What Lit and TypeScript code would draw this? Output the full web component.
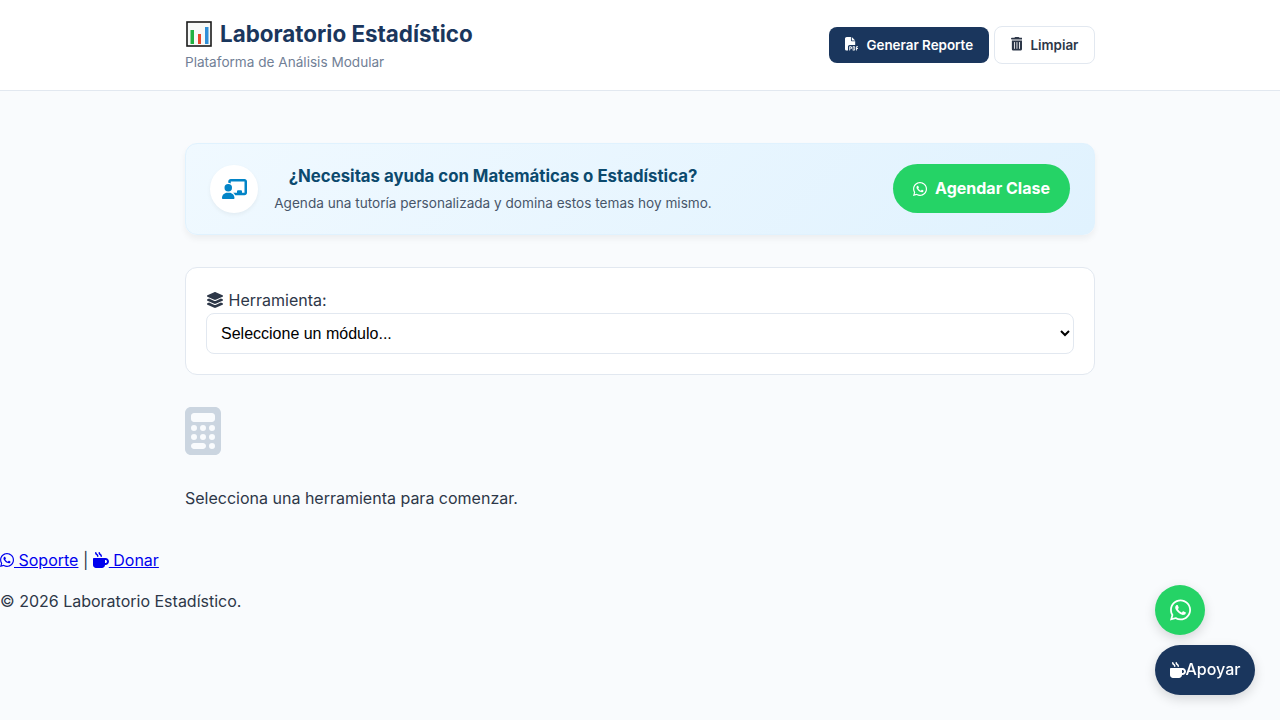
import { LitElement, html, css, svg } from "lit";
import { customElement } from "lit/decorators.js";

const WA = "M380.9 97.1C339 55.1 283.2 32 223.9 32c-122.4 0-222 99.6-222 222 0 39.1 10.2 77.3 29.6 111L0 480l117.7-30.9c32.4 17.7 68.9 27 106.1 27h.1c122.3 0 224.1-99.6 224.1-222 0-59.3-25.2-115-67.1-157zm-157 341.6c-33.2 0-65.7-8.9-94-25.7l-6.7-4-69.8 18.3L72 359.2l-4.4-7c-18.5-29.4-28.2-63.3-28.2-98.2 0-101.7 82.8-184.5 184.6-184.5 49.3 0 95.6 19.2 130.4 54.1 34.8 34.9 56.2 81.2 56.1 130.5 0 101.8-84.9 184.6-186.6 184.6zm101.2-138.2c-5.5-2.8-32.8-16.2-37.9-18-5.1-1.9-8.8-2.8-12.5 2.8-3.7 5.6-14.3 18-17.6 21.8-3.2 3.7-6.5 4.2-12 1.4-32.6-16.3-54-29.1-75.5-66-5.7-9.8 5.7-9.1 16.3-30.3 1.8-3.7.9-6.9-.5-9.7-1.4-2.8-12.5-30.1-17.1-41.2-4.5-10.8-9.1-9.3-12.5-9.5-3.2-.2-6.9-.2-10.6-.2-3.7 0-9.7 1.4-14.8 6.9-5.1 5.6-19.4 19-19.4 46.3 0 27.3 19.9 53.7 22.6 57.4 2.8 3.7 39.1 59.7 94.8 83.8 35.2 15.2 49 16.5 66.6 13.9 10.7-1.6 32.8-13.4 37.4-26.4 4.6-13 4.6-24.1 3.2-26.4-1.3-2.5-5-3.9-10.5-6.6z";
const TRASH = "M135.2 17.7C140.6 6.8 151.7 0 163.8 0H284.2c12.1 0 23.2 6.8 28.6 17.7L320 32h96c17.7 0 32 14.3 32 32s-14.3 32-32 32H32C14.3 96 0 81.7 0 64S14.3 32 32 32h96l7.2-14.3zM32 128H416V448c0 35.3-28.7 64-64 64H96c-35.3 0-64-28.7-64-64V128zm96 64c-8.8 0-16 7.2-16 16V432c0 8.8 7.2 16 16 16s16-7.2 16-16V208c0-8.8-7.2-16-16-16zm96 0c-8.8 0-16 7.2-16 16V432c0 8.8 7.2 16 16 16s16-7.2 16-16V208c0-8.8-7.2-16-16-16zm96 0c-8.8 0-16 7.2-16 16V432c0 8.8 7.2 16 16 16s16-7.2 16-16V208c0-8.8-7.2-16-16-16z";
const LAYERS = "M264.5 5.2c14.9-6.9 32.1-6.9 47 0l218.6 101c8.5 3.9 13.9 12.4 13.9 21.8s-5.4 17.9-13.9 21.8l-218.6 101c-14.9 6.9-32.1 6.9-47 0L45.9 149.8C37.4 145.8 32 137.3 32 128s5.4-17.9 13.9-21.8L264.5 5.2zM476.9 209.6l53.2 24.6c8.5 3.9 13.9 12.4 13.9 21.8s-5.4 17.9-13.9 21.8l-218.6 101c-14.9 6.9-32.1 6.9-47 0L45.9 277.8C37.4 273.8 32 265.3 32 256s5.4-17.9 13.9-21.8l53.2-24.6 152 70.2c23.4 10.8 50.4 10.8 73.8 0l152-70.2zm-152 198.2l152-70.2 53.2 24.6c8.5 3.9 13.9 12.4 13.9 21.8s-5.4 17.9-13.9 21.8l-218.6 101c-14.9 6.9-32.1 6.9-47 0L45.9 405.8C37.4 401.8 32 393.3 32 384s5.4-17.9 13.9-21.8l53.2-24.6 152 70.2c23.4 10.8 50.4 10.8 73.8 0z";
const MUG = "M88 0C74.7 0 64 10.7 64 24c0 38.9 23.4 59.4 39.1 73.1l1.1 1C120.5 112.3 128 119.9 128 136c0 13.3 10.7 24 24 24s24-10.7 24-24c0-38.9-23.4-59.4-39.1-73.1l-1.1-1C119.5 47.7 112 40.1 112 24c0-13.3-10.7-24-24-24zM32 192c-17.7 0-32 14.3-32 32V416c0 53 43 96 96 96H288c53 0 96-43 96-96h16c61.9 0 112-50.1 112-112s-50.1-112-112-112H352 32zm352 64h16c26.5 0 48 21.5 48 48s-21.5 48-48 48H384V256zM224 24c0-13.3-10.7-24-24-24s-24 10.7-24 24c0 38.9 23.4 59.4 39.1 73.1l1.1 1C232.5 112.3 240 119.9 240 136c0 13.3 10.7 24 24 24s24-10.7 24-24c0-38.9-23.4-59.4-39.1-73.1l-1.1-1C231.5 47.7 224 40.1 224 24z";
const CALC = "M64 0C28.7 0 0 28.7 0 64V448c0 35.3 28.7 64 64 64H320c35.3 0 64-28.7 64-64V64c0-35.3-28.7-64-64-64H64zM96 64H288c17.7 0 32 14.3 32 32v32c0 17.7-14.3 32-32 32H96c-17.7 0-32-14.3-32-32V96c0-17.7 14.3-32 32-32zm32 160a32 32 0 1 1 -64 0 32 32 0 1 1 64 0zM96 352a32 32 0 1 1 0-64 32 32 0 1 1 0 64zM64 416c0-17.7 14.3-32 32-32h96c17.7 0 32 14.3 32 32s-14.3 32-32 32H96c-17.7 0-32-14.3-32-32zM192 256a32 32 0 1 1 0-64 32 32 0 1 1 0 64zm32 64a32 32 0 1 1 -64 0 32 32 0 1 1 64 0zm64-64a32 32 0 1 1 0-64 32 32 0 1 1 0 64zm32 64a32 32 0 1 1 -64 0 32 32 0 1 1 64 0zM288 448a32 32 0 1 1 0-64 32 32 0 1 1 0 64z";
const PDF = "M0 64C0 28.7 28.7 0 64 0H224V128c0 17.7 14.3 32 32 32H384V304H176c-35.3 0-64 28.7-64 64V512H64c-35.3 0-64-28.7-64-64V64zm384 64H256V0L384 128zM176 352h32c30.9 0 56 25.1 56 56s-25.1 56-56 56H192v32c0 8.8-7.2 16-16 16s-16-7.2-16-16V448 368c0-8.8 7.2-16 16-16zm32 80c13.3 0 24-10.7 24-24s-10.7-24-24-24H192v48h16zm96-80h32c26.5 0 48 21.5 48 48v64c0 26.5-21.5 48-48 48H304c-8.8 0-16-7.2-16-16V368c0-8.8 7.2-16 16-16zm32 128c8.8 0 16-7.2 16-16V400c0-8.8-7.2-16-16-16H320v96h16zm80-112c0-8.8 7.2-16 16-16h48c8.8 0 16 7.2 16 16s-7.2 16-16 16H448v32h32c8.8 0 16 7.2 16 16s-7.2 16-16 16H448v48c0 8.8-7.2 16-16 16s-16-7.2-16-16V432 368z";
const BOARD = "M160 64c0-35.3 28.7-64 64-64H576c35.3 0 64 28.7 64 64V352c0 35.3-28.7 64-64 64H336.8c-11.8-25.5-29.9-47.5-52.4-64H384V320c0-17.7 14.3-32 32-32h64c17.7 0 32 14.3 32 32v32h64V64L224 64v49.1C205.2 102.2 183.3 96 160 96V64zm0 64a96 96 0 1 1 0 192 96 96 0 1 1 0-192zM133.3 352h53.3C260.3 352 320 411.7 320 485.3c0 14.7-11.9 26.7-26.7 26.7H26.7C11.9 512 0 500.1 0 485.3C0 411.7 59.7 352 133.3 352z";

const icon = (d: string, w: number, size: number) =>
  html`<svg class="fa" viewBox="0 0 ${w} 512" style="height:${size}px;width:${(size * w) / 512}px" fill="currentColor">${svg`<path d=${d}></path>`}</svg>`;

@customElement("app-root")
export class AppRoot extends LitElement {
  static styles = css`
    :host { display: block; min-height: 720px; background: #f9fbfd; font-family: Inter, "Liberation Sans", sans-serif; color: #2d3748; font-size: 16px; line-height: 1.6; }
    * { box-sizing: border-box; }
    .fa { display: inline-block; vertical-align: -0.125em; flex: none; }
    header { background: #fff; border-bottom: 1px solid #e2e8f0; height: 91px; display: flex; justify-content: center; }
    .head-in { width: 910px; display: flex; justify-content: space-between; align-items: center; }
    h1 { margin: 1px 0 0; font-size: 22.4px; line-height: 29px; font-weight: 700; color: #1a365d; display: flex; align-items: center; gap: 8px; padding-left: 1px; }
    .emoji { width: 26px; height: 26px; flex: none; }
    .sub { margin-top: 4px; font-size: 13.6px; line-height: 20px; color: #718096; }
    .actions { display: flex; align-items: center; gap: 5px; }
    .btn { display: inline-flex; align-items: center; justify-content: center; gap: 8px; font: 600 13.4px/16px Inter, sans-serif; border-radius: 8px; }
    .btn .fa { margin-top: -2px; }
    .primary { width: 160px; height: 36px; background: #1a365d; color: #fff; }
    .ghost { width: 101px; height: 38px; background: #fff; color: #2d3748; border: 1px solid #e2e8f0; }
    main { width: 910px; margin: 0 auto; padding-top: 52px; }
    .banner { height: 92px; border-radius: 12px; padding: 0 24px; display: flex; align-items: center; background: linear-gradient(135deg, #f0f9ff, #e0f2fe); border: 1px solid #e0f2fe; box-shadow: 0 4px 6px rgba(0,0,0,.05); }
    .circle { width: 48px; height: 48px; border-radius: 50%; background: #fff; color: #0284c7; display: flex; align-items: center; justify-content: center; flex: none; box-shadow: 0 2px 4px rgba(0,0,0,.05); }
    .b-text { margin-left: 16px; width: 438px; text-align: center; }
    .b-text h3 { margin: -1px 0 0; font-size: 16.8px; line-height: 27px; font-weight: 700; color: #0c4a6e; }
    .b-text p { margin: 3px 0 0; font-size: 13.6px; line-height: 21px; color: #475569; }
    .cta { margin: 0 0 1px auto; width: 177px; height: 49px; border-radius: 25px; background: #25d366; color: #fff; display: flex; align-items: center; justify-content: center; gap: 8px; font-size: 16px; font-weight: 700; }
    .card { margin-top: 32px; height: 108px; background: #fff; border: 1px solid #e2e8f0; border-radius: 12px; padding: 20px; }
    label { display: block; height: 25px; }
    label .fa { margin-right: 4.5px; }
    select { display: block; width: 100%; height: 41px; padding: 0 10px; border: 1px solid #e2e8f0; border-radius: 8px; background: #fff; color: #000; font: 16px "Liberation Sans", Arial, sans-serif; }
    .empty { margin-top: 32px; }
    .empty .ic { color: #cbd5e0; height: 48px; }
    .empty .ic .fa { display: block; }
    .empty p { margin: 31px 0 0; }
    footer { margin-top: 36px; }
    footer p { margin: 0; }
    footer a { color: #0000ee; text-decoration: underline; }
    footer .copy { margin-top: 15.5px; }
    .fab { position: fixed; display: flex; align-items: center; justify-content: center; color: #fff; box-shadow: 0 4px 12px rgba(0,0,0,.15); }
    .fab-wa { left: 1155px; top: 585px; width: 50px; height: 50px; border-radius: 50%; background: #25d366; }
    .fab-mug { left: 1155px; top: 645px; width: 100px; height: 50px; border-radius: 25px; background: #1a365d; font-weight: 500; }
  `;

  render() {
    return html`
      <header>
        <div class="head-in">
          <div>
            <h1>
              <svg class="emoji" viewBox="0 0 26 26">
                <rect x="1" y="1" width="24" height="24" fill="#f7f9f8" stroke="#1b1b1b" stroke-width="1.6"></rect>
                <rect x="4.5" y="9" width="3.5" height="14" fill="#1fb141"></rect>
                <rect x="12" y="13" width="3" height="10" fill="#e8472b"></rect>
                <rect x="19" y="6" width="3.5" height="17" fill="#2f8fd8"></rect>
              </svg>
              Laboratorio Estadístico
            </h1>
            <div class="sub">Plataforma de Análisis Modular</div>
          </div>
          <div class="actions">
            <div class="btn primary">${icon(PDF, 512, 13.6)}Generar Reporte</div>
            <div class="btn ghost">${icon(TRASH, 448, 13.6)}Limpiar</div>
          </div>
        </div>
      </header>
      <main>
        <section class="banner">
          <div class="circle">${icon(BOARD, 640, 20)}</div>
          <div class="b-text">
            <h3>¿Necesitas ayuda con Matemáticas o Estadística?</h3>
            <p>Agenda una tutoría personalizada y domina estos temas hoy mismo.</p>
          </div>
          <div class="cta">${icon(WA, 448, 16)}Agendar Clase</div>
        </section>
        <section class="card">
          <label>${icon(LAYERS, 576, 16)}Herramienta:</label>
          <select><option>Seleccione un módulo...</option></select>
        </section>
        <section class="empty">
          <div class="ic">${icon(CALC, 384, 48)}</div>
          <p>Selecciona una herramienta para comenzar.</p>
        </section>
      </main>
      <footer>
        <p><a href="#">${icon(WA, 448, 16)} Soporte</a> | <a href="#">${icon(MUG, 512, 16)} Donar</a></p>
        <p class="copy">© 2026 Laboratorio Estadístico.</p>
      </footer>
      <div class="fab fab-wa">${icon(WA, 448, 24)}</div>
      <div class="fab fab-mug">${icon(MUG, 512, 16)}Apoyar</div>
    `;
  }
}
